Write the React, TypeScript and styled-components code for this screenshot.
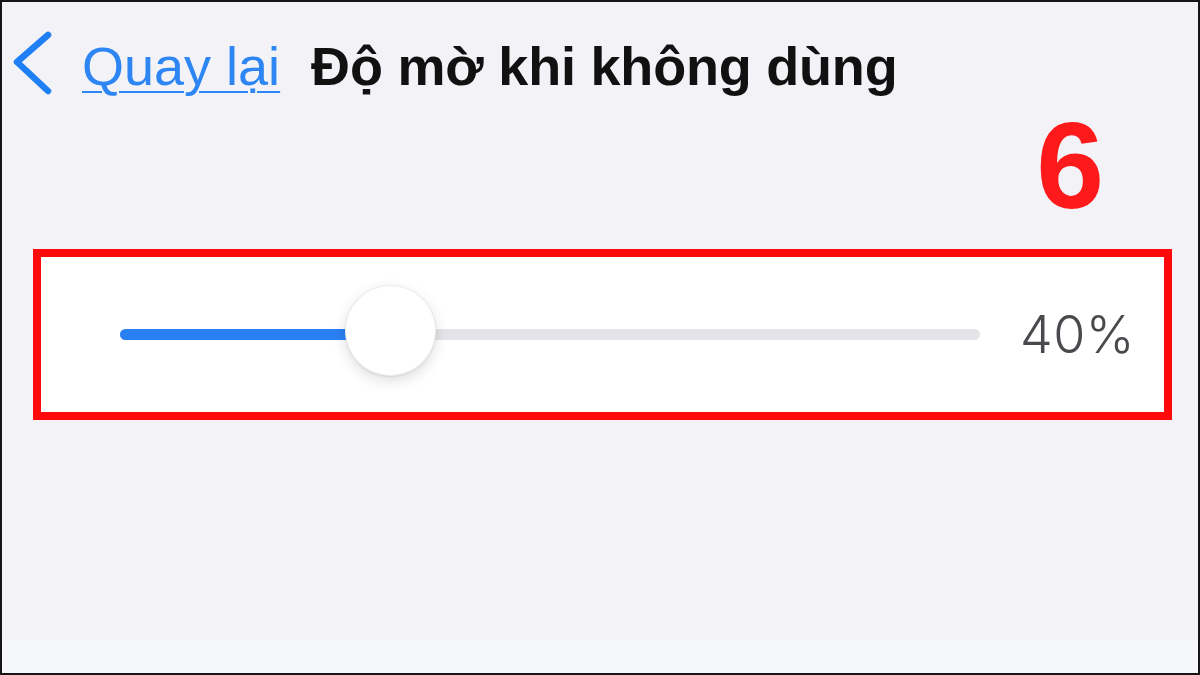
import styled, { createGlobalStyle } from "styled-components";

const GlobalStyle = createGlobalStyle`
	html, body {
		margin: 0;
		padding: 0;
		background: #f2f2f7;
	}
	* {
		box-sizing: border-box;
	}
`;

const Frame = styled.div`
	width: 1200px;
	height: 675px;
	border: 2px solid #151515;
	background: #f2f2f7;
	display: flex;
	flex-direction: column;
	overflow: hidden;
	font-family: "Liberation Sans", Arial, sans-serif;
`;

const Main = styled.div`
	flex: 1;
	display: flex;
	flex-direction: column;
	padding-right: 26px;
`;

const NavBar = styled.div`
	display: flex;
	align-items: center;
	height: 62px;
	margin-top: 33px;
	padding-left: 11px;
`;

const BackLink = styled.a`
	display: flex;
	align-items: center;
	gap: 29px;
	color: #2d86f3;
	font-size: 54px;
	line-height: 62px;
	text-decoration: none;
	& > svg {
		margin-top: -6px;
	}
	& > span {
		text-decoration: underline;
		text-decoration-thickness: 2px;
		text-underline-offset: 6px;
	}
`;

const Title = styled.h1`
	margin: 0 0 0 31px;
	font-size: 54px;
	line-height: 62px;
	font-weight: 700;
	color: #111;
	letter-spacing: -0.2px;
`;

const StepRow = styled.div`
	display: flex;
	justify-content: flex-end;
	margin-top: 10px;
	padding-right: 68px;
`;

const StepNumber = styled.div`
	font-size: 122px;
	line-height: 118px;
	font-weight: 700;
	color: #fe1a1a;
`;

const Highlight = styled.div`
	margin: 24px 0 0 31px;
	height: 171px;
	border: 8px solid #ff0a0a;
	background: #fff;
	display: flex;
	align-items: center;
	gap: 40px;
	padding: 0 20px 0 79px;
`;

const Slider = styled.div`
	position: relative;
	flex: 0 0 860px;
	height: 11px;
	border-radius: 6px;
	background: #e4e4e8;
`;

const Fill = styled.div`
	height: 100%;
	border-radius: 6px 0 0 6px;
	background: #2a7ff2;
`;

const Thumb = styled.div`
	position: absolute;
	top: 50%;
	width: 91px;
	height: 91px;
	margin: -50px 0 0 -45px;
	border-radius: 50%;
	background: #fff;
	border: 1px solid rgba(0, 0, 0, 0.07);
	box-shadow: 0 5px 14px rgba(0, 0, 0, 0.13), 0 1px 2px rgba(0, 0, 0, 0.08);
`;

const Value = styled.div`
	flex-shrink: 0;
	font-family: Inter, "Noto Sans", sans-serif;
	font-weight: 300;
	font-size: 52px;
	color: #4a4a4e;
	letter-spacing: 0.5px;
`;

const Footer = styled.div`
	height: 33px;
	background: #f6f7fb;
`;

const Chevron = () => (
	<svg width="40" height="64" viewBox="0 0 40 64">
		<path
			d="M35 4 L4 31 L35 60"
			fill="none"
			stroke="#1f7ff4"
			strokeWidth="6.5"
			strokeLinecap="round"
			strokeLinejoin="round"
		/>
	</svg>
);

const value = 40;
// thumb sits where the track meets the knob in the shot
const thumbPos = 31.4;

const App = () => {
	return (
		<>
			<GlobalStyle />
			<Frame>
				<Main>
					<NavBar>
						<BackLink href="#">
							<Chevron />
							<span>Quay lại</span>
						</BackLink>
						<Title>Độ mờ khi không dùng</Title>
					</NavBar>
					<StepRow>
						<StepNumber>6</StepNumber>
					</StepRow>
					<Highlight>
						<Slider>
							<Fill style={{ width: `${thumbPos}%` }} />
							<Thumb style={{ left: `${thumbPos}%` }} />
						</Slider>
						<Value>{value}%</Value>
					</Highlight>
				</Main>
				<Footer />
			</Frame>
		</>
	);
};

export default App;
